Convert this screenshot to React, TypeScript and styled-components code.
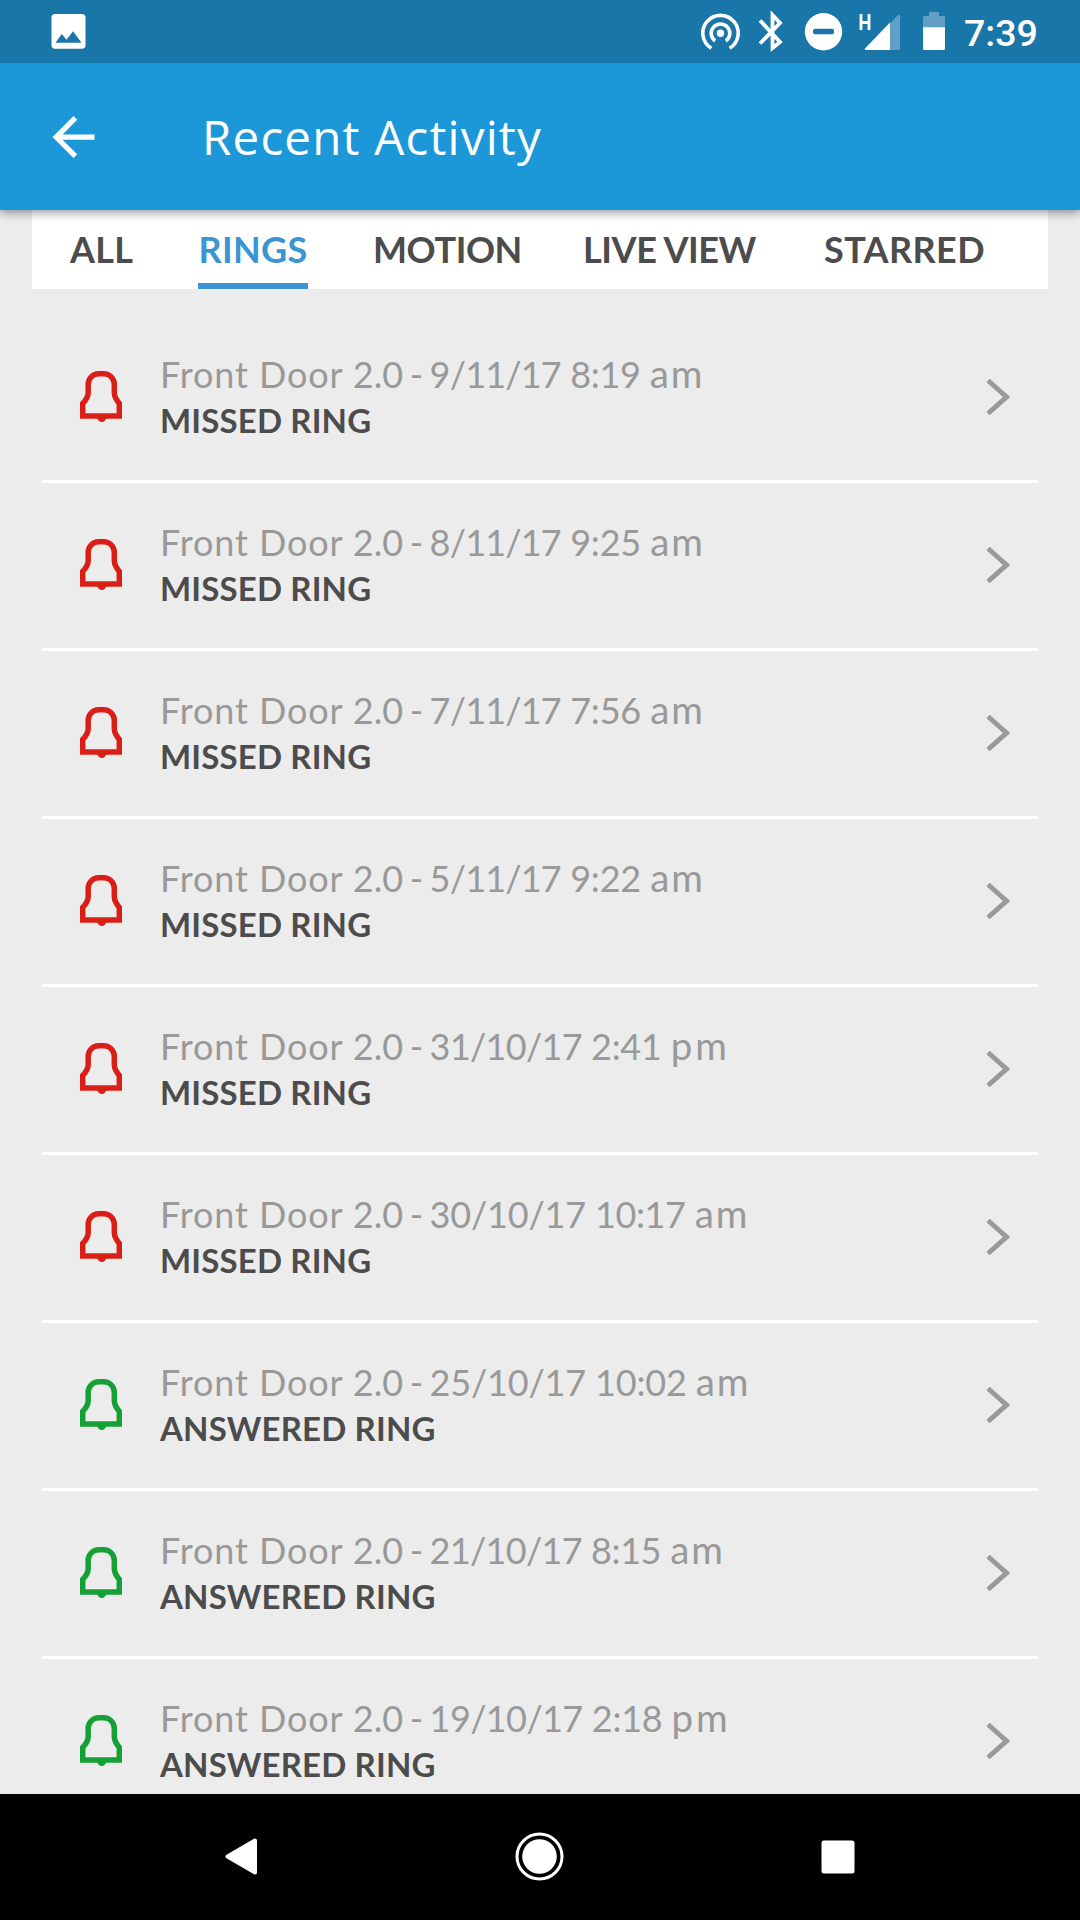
import React from "react";
import styled, { createGlobalStyle } from "styled-components";

const Global = createGlobalStyle`
  * { box-sizing: border-box; }
  body { margin: 0; background: #ececec; }
`;

const Screen = styled.div`
  width: 1080px;
  height: 1920px;
  display: flex;
  flex-direction: column;
  overflow: hidden;
  background: #ececec;
  font-family: Lato, sans-serif;
`;

const StatusBar = styled.div`
  height: 63px;
  flex: none;
  display: flex;
  justify-content: space-between;
  padding: 0 42px 0 51px;
  background: #1976a9;
  position: relative;
  z-index: 2;
`;

const StatusGroup = styled.div`
  display: flex;
`;

const Clock = styled.span`
  width: 74px;
  margin-left: 17px;
  font: 500 37.5px/67px Roboto, sans-serif;
  color: #fff;
`;

const AppBar = styled.header`
  height: 147px;
  flex: none;
  display: flex;
  align-items: center;
  padding-left: 42px;
  background: #1c97d7;
  box-shadow: 0 2px 10px rgba(0, 0, 0, 0.45);
  z-index: 1;
`;

const Title = styled.h1`
  margin: 0 0 0 97px;
  font: 400 47.5px/62px "Open Sans", sans-serif;
  letter-spacing: 1.2px;
  color: #fff;
`;

const Tabs = styled.nav`
  height: 79px;
  flex: none;
  margin: 0 32px;
  padding: 0 0 0 38px;
  display: flex;
  gap: 65px;
  background: #fff;
`;

const Tab = styled.div<{ $active?: boolean; $width: number; $spacing: number }>`
  width: ${(p) => p.$width}px;
  height: 79px;
  text-align: center;
  white-space: nowrap;
  font-size: 36px;
  font-weight: 700;
  line-height: 79px;
  letter-spacing: ${(p) => p.$spacing}px;
  color: ${(p) => (p.$active ? "#3c95d3" : "#4c4c4c")};
  border-bottom: ${(p) => (p.$active ? "6px solid #3c95d3" : "none")};
`;

const List = styled.main`
  flex: 1;
  min-height: 0;
  overflow: hidden;
  padding: 26px 42px 0;
`;

const Row = styled.div`
  height: 168px;
  display: flex;
  align-items: flex-start;
  border-bottom: 3px solid #fff;
`;

const BellBox = styled.div`
  width: 118px;
  padding: 56px 0 0 38px;
`;

const Info = styled.div`
  flex: 1;
  padding-top: 37px;
`;

const When = styled.div`
  height: 44px;
  font-size: 36px;
  line-height: 44px;
  white-space: nowrap;
  color: #999;
`;

const Part = styled.span<{ $spacing: number }>`
  letter-spacing: ${(p) => p.$spacing}px;
`;

const Half = styled.span<{ $spacing: number }>`
  font-size: 38.5px;
  line-height: 1;
  letter-spacing: ${(p) => p.$spacing}px;
`;

const Dash = styled.span`
  margin: 0 -2.8px 0 -2.5px;
`;

const Kind = styled.div`
  font-size: 33px;
  font-weight: 700;
  line-height: 48px;
  letter-spacing: 0.15px;
  white-space: nowrap;
  color: #4c4c4c;
`;

const ChevronBox = styled.div`
  padding: 63px 28px 0 0;
`;

const NavBar = styled.footer`
  height: 126px;
  flex: none;
  display: flex;
  justify-content: space-between;
  padding: 38px 217px 0 216px;
  background: #000;
`;

const Bell = ({ color }: { color: string }) => (
  <svg width="42" height="52" viewBox="0 0 42 52" style={{ display: "block" }}>
    <path d="M2.700 44.900V32.500C6.500 28.500 8.200 26 8.200 21.500V13.300A10.500 10.500 0 0 1 18.700 2.800H23.800A10.500 10.500 0 0 1 34.300 13.300V21.500C34.300 26 36 28.500 39.300 32.500V44.900Z" fill="none" stroke={color} strokeWidth="5.500" />
    <path d="M17 47h9.500c-.8 2.300-2.500 4-4.700 4s-4-1.700-4.800-4z" fill={color} />
  </svg>
);

const Chevron = () => (
  <svg width="24" height="38" viewBox="0 0 24 38" style={{ display: "block" }}>
    <path d="M2 2.500 20.500 19 2 35.500" fill="none" stroke="#999" strokeWidth="5" />
  </svg>
);

const StatusIcons = () => (
  <svg width="246" height="63" viewBox="701 0 246 63">
    <g fill="none" stroke="#fff" strokeWidth="3.600">
      <path d="M711.400 48.300A17.700 17.700 0 1 1 729.600 48.300" />
      <path d="M715.200 40.900A9.300 9.300 0 1 1 725.800 40.900" />
    </g>
    <circle cx="720.500" cy="33.300" r="3.700" fill="#fff" />
    <path d="M760 20.500 780 42 772.500 48V15L780 23 760 43.500" fill="none" stroke="#fff" strokeWidth="3.800" />
    <circle cx="823.500" cy="31.700" r="18.700" fill="#fff" />
    <rect x="813" y="28.800" width="21" height="5.400" rx="2" fill="#1976a9" />
    <path d="M861 14V30M869 14V30M861 22.500H869" stroke="#fff" strokeWidth="2.800" />
    <path d="M865 48.500 898 15.200Q900 14.200 900 16V48.500Q900 50 898.500 50H866Q864.500 50 865 48.500Z" fill="#619fc4" />
    <path d="M865 48.500 890 22.500V50H866Q864.500 50 865 48.500Z" fill="#fff" />
    <path d="M929 12H939V16H943.500Q945 16 945 17.500V28H923V17.500Q923 16 924.500 16H929Z" fill="#619fc4" />
    <path d="M923 27.300H945V48.500Q945 50 943.500 50H924.500Q923 50 923 48.500Z" fill="#fff" />
  </svg>
);

const missed = { kind: "MISSED RING", color: "#d91e16" };
const answered = { kind: "ANSWERED RING", color: "#15a035" };

const events = [
  { date: "9/11/17", time: "8:19", half: "am", spacing: [-0.8, -0.3, 1.8], ...missed },
  { date: "8/11/17", time: "9:25", half: "am", spacing: [-0.8, -0.2, 1.8], ...missed },
  { date: "7/11/17", time: "7:56", half: "am", spacing: [-0.8, -0.2, 1.8], ...missed },
  { date: "5/11/17", time: "9:22", half: "am", spacing: [-0.8, -0.2, 1.8], ...missed },
  { date: "31/10/17", time: "2:41", half: "pm", spacing: [-0.7, -0.3, 3], ...missed },
  { date: "30/10/17", time: "10:17", half: "am", spacing: [-0.2, -0.4, 1.8], ...missed },
  { date: "25/10/17", time: "10:02", half: "am", spacing: [-0.2, -0.2, 1.8], ...answered },
  { date: "21/10/17", time: "8:15", half: "am", spacing: [-0.7, -0.4, 1.8], ...answered },
  { date: "19/10/17", time: "2:18", half: "pm", spacing: [-0.6, -0.3, 3], ...answered },
];

export default function App() {
  return (
    <Screen>
      <Global />
      <StatusBar>
        <svg width="35" height="63" viewBox="0 0 35 63">
          <path fillRule="evenodd" fill="#fff" d="M4 14H31Q34.500 14 34.500 17.500V45Q34.500 48.700 31 48.700H4Q.5 48.700 .5 45V17.500Q.5 14 4 14ZM4.500 42.700H30.500L22 31.300 15.500 39.700 10.800 34Z" />
        </svg>
        <StatusGroup>
          <StatusIcons />
          <Clock>7:39</Clock>
        </StatusGroup>
      </StatusBar>
      <AppBar>
        <svg width="63" height="64" viewBox="0 0 24 24">
          <path fill="#fff" d="M20 11H7.830l5.590-5.590L12 4l-8 8 8 8 1.410-1.410L7.830 13H20v-2z" />
        </svg>
        <Title>Recent Activity</Title>
      </AppBar>
      <Tabs>
        <Tab $width={63} $spacing={0.3}>ALL</Tab>
        <Tab $width={110} $spacing={0.3} $active>RINGS</Tab>
        <Tab $width={142} $spacing={-0.4}>MOTION</Tab>
        <Tab $width={179} $spacing={-0.4}>LIVE VIEW</Tab>
        <Tab $width={158} $spacing={0.4}>STARRED</Tab>
      </Tabs>
      <List>
        {events.map((e) => (
          <Row key={e.date}>
            <BellBox><Bell color={e.color} /></BellBox>
            <Info>
              <When>
                <Part $spacing={0.9}>Front Door</Part> 2.0 <Dash>-</Dash>{" "}
                <Part $spacing={e.spacing[0]}>{e.date}</Part>{" "}
                <Part $spacing={e.spacing[1]}>{e.time}</Part>{" "}
                <Half $spacing={e.spacing[2]}>{e.half}</Half>
              </When>
              <Kind>{e.kind}</Kind>
            </Info>
            <ChevronBox><Chevron /></ChevronBox>
          </Row>
        ))}
      </List>
      <NavBar>
        <svg width="48" height="48" viewBox="0 0 48 48">
          <path d="M11.500 24.500 39 8.500V40.500Z" fill="#fff" stroke="#fff" strokeWidth="4" strokeLinejoin="round" />
        </svg>
        <svg width="50" height="50" viewBox="0 0 50 50">
          <circle cx="24.500" cy="24.500" r="22.500" fill="none" stroke="#fff" strokeWidth="3" />
          <circle cx="24.500" cy="24.500" r="17.300" fill="#fff" />
        </svg>
        <svg width="48" height="48" viewBox="0 0 48 48">
          <rect x="6.500" y="8.500" width="33" height="33" rx="2.500" fill="#fff" />
        </svg>
      </NavBar>
    </Screen>
  );
}
